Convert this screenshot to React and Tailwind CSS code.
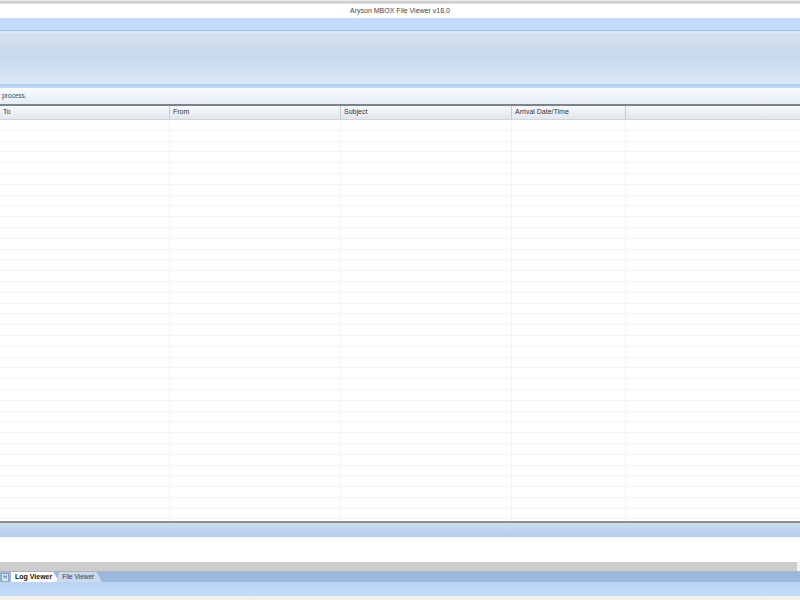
const columns = [
  { label: 'To', width: 'w-[170px]' },
  { label: 'From', width: 'w-[171px]' },
  { label: 'Subject', width: 'w-[171px]' },
  { label: 'Arrival Date/Time', width: 'w-[114px]' },
  { label: '', width: 'flex-1' },
];

const rows = Array.from({ length: 38 });

const App = () => {
  return (
    <div className='w-[800px] h-[600px] overflow-hidden flex flex-col bg-white font-["Liberation_Sans",Arial,sans-serif]'>
      {/* Window border */}
      <div className='h-[4px] bg-gradient-to-b from-[#f0f0f0] via-[#c8c8c8] to-[#e4e4e4]' />

      {/* Title bar */}
      <div className='h-[14px] bg-white flex items-center justify-center text-[7px] text-[#444]'>
        Aryson MBOX File Viewer v18.0
      </div>

      {/* Menu band */}
      <div className='h-[12px] bg-[#c2dbf9]' />
      <div className='h-[3px] bg-[#dbe7f5] border-t border-[#a9c6ea]' />

      {/* Ribbon */}
      <div className='h-[51px] bg-gradient-to-b from-[#d3e0ef] via-[#c9d9ec] to-[#dbe8f6]' />
      <div className='h-[4px] bg-gradient-to-b from-[#a8c8ee] to-[#c8ddf6]' />

      {/* Status */}
      <div className='h-[16px] bg-gradient-to-b from-[#fbfcfe] to-[#e4ecf6] flex items-center px-[2px] text-[6.5px] text-[#34506e]'>
        process.
      </div>
      <div className='h-[2px] bg-[#7b838d]' />

      {/* Grid header */}
      <div className='h-[14px] flex bg-gradient-to-b from-[#f7f8fa] to-[#e2e7ed] border-b border-[#d0d5db]'>
        {columns.map((col, i) => (
          <div
            key={i}
            className={`${col.width} h-full flex items-center px-[3px] text-[7px] text-[#333] ${i < 4 ? 'border-r border-[#c4cad2]' : ''}`}
          >
            {col.label}
          </div>
        ))}
      </div>

      {/* Grid body */}
      <div className='flex-1 overflow-hidden'>
        {rows.map((_, r) => (
          <div key={r} className='h-[10.8px] flex border-b border-[#f3f4f5]'>
            {columns.map((col, i) => (
              <div
                key={i}
                className={`${col.width} h-full ${i < 4 ? 'border-r border-[#f2f3f4]' : ''}`}
              />
            ))}
          </div>
        ))}
      </div>
      <div className='h-[2px] bg-[#8a8f96]' />

      {/* Lower panel */}
      <div className='h-[14px] bg-gradient-to-b from-[#c9dcf2] to-[#b7cde8]' />
      <div className='h-[25px] bg-white' />
      <div className='h-[9px] bg-[#cdcdcd] border-r-[3px] border-[#f2f2f2]' />

      {/* Tabs */}
      <div className='h-[11px] bg-[#9ab7de] flex items-end'>
        <div className='w-[8px] h-[9px] ml-[1px] bg-[#dfe7f1] border border-[#8aa3c4] flex items-center justify-center text-[5px] text-[#445] leading-none'>
          H
        </div>
        <div className='ml-[2px] h-[10px] pl-[4px] pr-[7px] bg-white flex items-center text-[7px] font-bold text-[#111] [clip-path:polygon(0_0,88%_0,100%_100%,0_100%)]'>
          Log Viewer
        </div>
        <div className='-ml-[3px] h-[10px] pl-[6px] pr-[8px] bg-[#c9d9ee] flex items-center text-[6.5px] text-[#2c3e55] [clip-path:polygon(6%_0,88%_0,100%_100%,0_100%)]'>
          File Viewer
        </div>
      </div>

      {/* Status bar */}
      <div className='h-[14px] bg-gradient-to-b from-[#b9d4f4] to-[#c6ddf8]' />
      <div className='h-[4px] bg-[#f3f0e9]' />
    </div>
  );
};

export default App;
